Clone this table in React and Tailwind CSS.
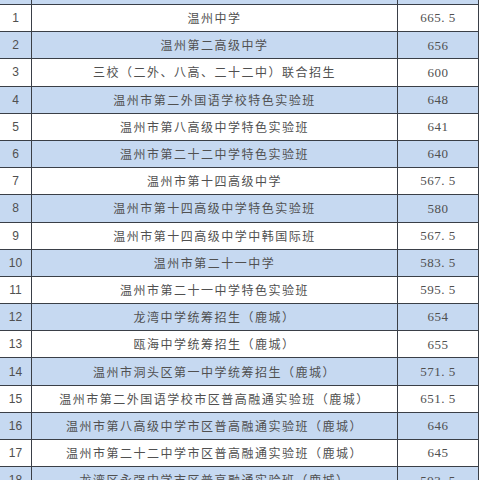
import React from 'react'

const rows = [
  ['1', '温州中学', '665. 5'],
  ['2', '温州第二高级中学', '656'],
  ['3', '三校（二外、八高、二十二中）联合招生', '600'],
  ['4', '温州市第二外国语学校特色实验班', '648'],
  ['5', '温州市第八高级中学特色实验班', '641'],
  ['6', '温州市第二十二中学特色实验班', '640'],
  ['7', '温州市第十四高级中学', '567. 5'],
  ['8', '温州市第十四高级中学特色实验班', '580'],
  ['9', '温州市第十四高级中学中韩国际班', '567. 5'],
  ['10', '温州市第二十一中学', '583. 5'],
  ['11', '温州市第二十一中学特色实验班', '595. 5'],
  ['12', '龙湾中学统筹招生（鹿城）', '654'],
  ['13', '瓯海中学统筹招生（鹿城）', '655'],
  ['14', '温州市洞头区第一中学统筹招生（鹿城）', '571. 5'],
  ['15', '温州市第二外国语学校市区普高融通实验班（鹿城）', '651. 5'],
  ['16', '温州市第八高级中学市区普高融通实验班（鹿城）', '646'],
  ['17', '温州市第二十二中学市区普高融通实验班（鹿城）', '645'],
  ['18', '龙湾区永强中学市区普高融通实验班（鹿城）', '593. 5'],
]

const App = () => {
  return (
    <div className="w-[480px] h-[480px] overflow-hidden bg-white">
      <div className="w-[479px] border-r border-[#3a3f47]">
        <div className="h-[4px] flex bg-[#c6d9f1]">
          <div className="w-[32px] border-r border-[#3a3f47]"></div>
          <div className="w-[366px] border-r border-[#3a3f47]"></div>
          <div className="flex-1"></div>
        </div>
        {rows.map(([n, name, score], i) => (
          <div
            key={n}
            className={
              'h-[27.2px] flex border-t border-[#3a3f47] text-[#505050] ' +
              (i % 2 === 1 ? 'bg-[#c6d9f1]' : 'bg-white')
            }
          >
            <div className="w-[32px] border-r border-[#3a3f47] flex items-center justify-center text-[12px] font-['Liberation_Sans',sans-serif]">
              {n}
            </div>
            <div className="w-[366px] border-r border-[#3a3f47] flex items-center justify-center text-[12px] tracking-[1.5px] font-['Noto_Sans_CJK_SC',sans-serif]">
              {name}
            </div>
            <div className="flex-1 flex items-center justify-center text-[13px] tracking-[0.5px] whitespace-pre font-['Liberation_Serif',serif]">
              {score}
            </div>
          </div>
        ))}
      </div>
    </div>
  )
}

export default App
